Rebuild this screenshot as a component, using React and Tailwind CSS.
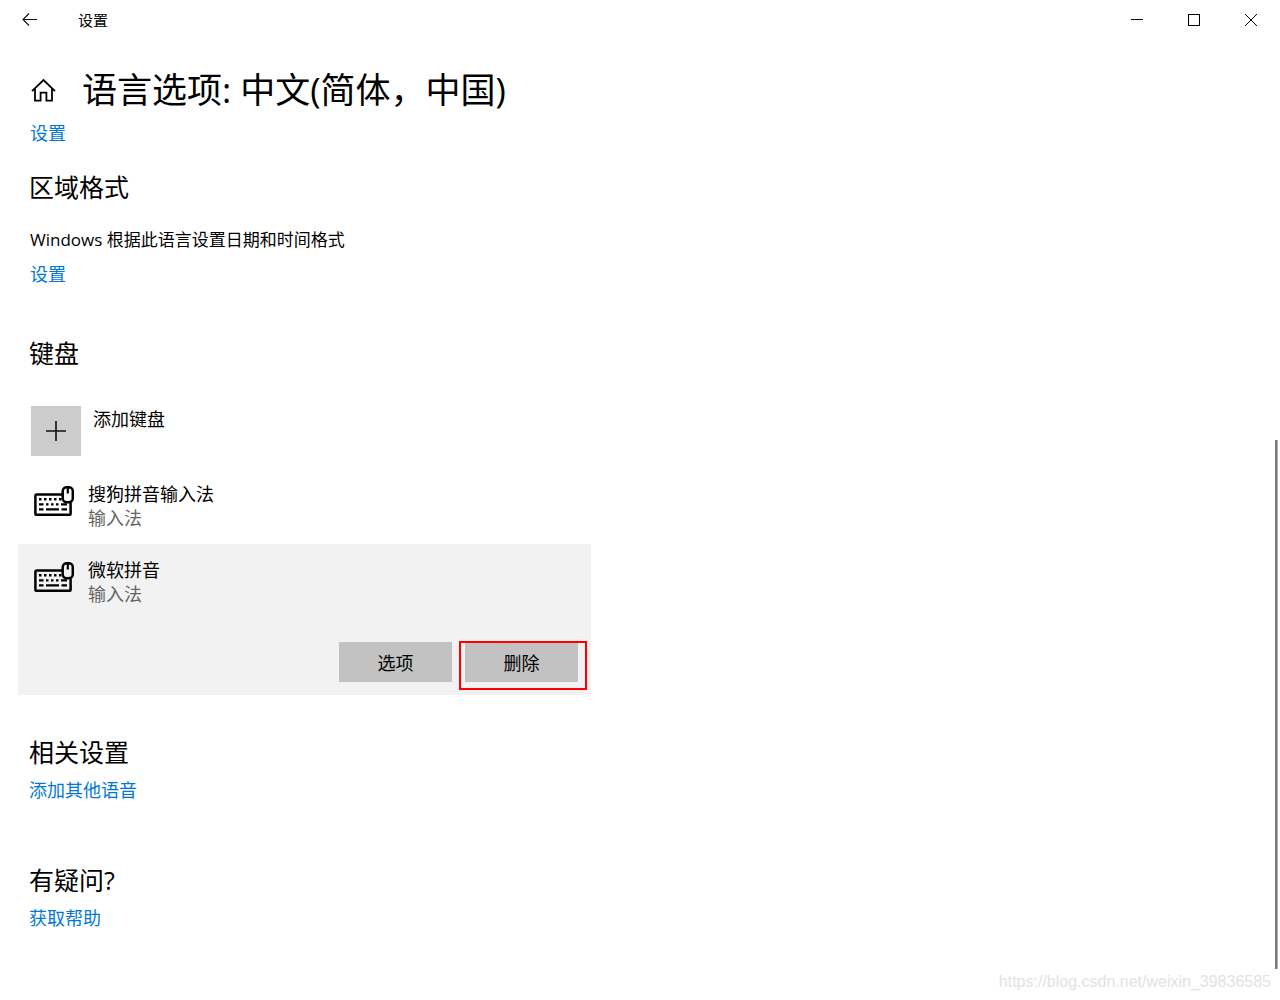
import React from "react";

function BackIcon() {
  return (
    <svg width="16" height="14" viewBox="0 0 16 14" fill="none" stroke="#111" strokeWidth="1.1" aria-hidden="true">
      <path d="M15 6.5H1M7 .5l-6 6 6 6" />
    </svg>
  );
}

function HomeIcon() {
  return (
    <svg width="25" height="24" viewBox="0 0 25 24" fill="none" stroke="#000" strokeWidth="1.8" aria-hidden="true">
      <path d="M1 13.1L12.5 2.1L24 13.1" />
      <path d="M4 10.7V22.6H9.6V14.6H15.4V22.6H21V10.7" />
    </svg>
  );
}

function KeyboardIcon() {
  return (
    <svg width="40" height="31" viewBox="0 0 40 31" fill="none" aria-hidden="true">
      <path
        d="M28 8.4H2.8Q1.4 8.4 1.4 9.8V27.4Q1.4 28.8 2.8 28.8H35.2Q36.6 28.8 36.6 27.4V16.5"
        stroke="#000"
        strokeWidth="2.5"
      />
      <rect x="28.7" y="1.2" width="10.1" height="15" rx="4" stroke="#000" strokeWidth="2.5" />
      <path d="M33.8 2V7.5" stroke="#000" strokeWidth="2.2" />
      <path
        d="M5 12h2.5v2.5H5zM10 12h2.5v2.5H10zM15 12h2.5v2.5H15zM20 12h2.5v2.5H20zM25 12h2.5v2.5H25zM5 17.2h4.5v2.4H5zM12 17.2h2.5v2.4H12zM17 17.2h2.5v2.4H17zM22 17.2h2.5v2.4H22zM27 17.2h6v2.4h-6zM5 22.2h4.5v2.4H5zM12 22.2h13v2.4H12zM27.5 22.2H33v2.4h-5.5z"
        fill="#000"
      />
    </svg>
  );
}

function TitleBar() {
  return (
    <header className="flex h-10 items-center justify-between">
      <div className="flex items-center">
        <button type="button" aria-label="返回" className="flex h-10 w-15 items-center justify-center">
          <BackIcon />
        </button>
        <span className="pl-[18px] text-[15px] leading-6">设置</span>
      </div>
      <div className="flex pr-px">
        <button type="button" aria-label="最小化" className="flex h-10 w-[57px] items-center justify-center">
          <svg width="12" height="12" stroke="#000" fill="none" shapeRendering="crispEdges">
            <path d="M0 5.5H12" />
          </svg>
        </button>
        <button type="button" aria-label="最大化" className="flex h-10 w-[57px] items-center justify-center">
          <svg width="12" height="12" stroke="#000" fill="none" shapeRendering="crispEdges">
            <path d="M.5 .5H11.5V11.5H.5Z" />
          </svg>
        </button>
        <button type="button" aria-label="关闭" className="flex h-10 w-[57px] items-center justify-center">
          <svg width="12" height="12" stroke="#000" fill="none">
            <path d="M0 0L12 12M12 0L0 12" />
          </svg>
        </button>
      </div>
    </header>
  );
}

function Heading({ children }) {
  return <h2 className="text-[25px] leading-8">{children}</h2>;
}

function TextLink({ children }) {
  return (
    <a href="#" className="block w-fit text-[#0078d7]">
      {children}
    </a>
  );
}

function Method({ name }) {
  return (
    <div className="flex gap-3.5">
      <span className="pt-1">
        <KeyboardIcon />
      </span>
      <div>
        <p>{name}</p>
        <p className="text-[#666]">输入法</p>
      </div>
    </div>
  );
}

function ActionButton({ children }) {
  return (
    <button type="button" className="h-10 w-[113px] bg-[#c2c2c2] pt-0.5">
      {children}
    </button>
  );
}

export default function App() {
  return (
    <div className="relative min-h-screen bg-white font-['Open_Sans','Noto_Sans_CJK_SC',sans-serif] text-[18px] leading-6 text-black">
      <TitleBar />
      <main className="pb-16">
        <div className="flex items-center pt-[26px] pl-[31px]">
          <a href="#" aria-label="主页">
            <HomeIcon />
          </a>
          <h1 className="pl-[26px] text-[35px] leading-12">语言选项: 中文(简体，中国)</h1>
        </div>
        <div className="mt-[7px] pl-[30px]">
          <TextLink>设置</TextLink>
        </div>

        <section className="mt-[26px] pl-[29px]">
          <Heading>区域格式</Heading>
          <p className="mt-[25px] pl-px text-[17px]">Windows 根据此语言设置日期和时间格式</p>
          <div className="mt-2.5 pl-px">
            <TextLink>设置</TextLink>
          </div>
        </section>

        <section className="mt-[51px]">
          <div className="pl-[29px]">
            <Heading>键盘</Heading>
          </div>
          <button type="button" className="mt-[37px] ml-[31px] flex items-start gap-3 text-left">
            <span className="flex size-[50px] items-center justify-center bg-[#ccc]">
              <svg width="20" height="20" stroke="#111" strokeWidth="1.6" aria-hidden="true">
                <path d="M0 10H20M10 0V20" />
              </svg>
            </span>
            <span className="pt-px">添加键盘</span>
          </button>
          <ul className="mt-3 ml-[18px] max-w-[573px]">
            <li className="h-19 px-4 pt-3.5">
              <Method name="搜狗拼音输入法" />
            </li>
            <li className="bg-[#f2f2f2] pt-3.5 pr-[13px] pb-[13px] pl-4">
              <Method name="微软拼音" />
              <div className="mt-9 flex justify-end gap-[13px]">
                <ActionButton>选项</ActionButton>
                <div className="relative">
                  <ActionButton>删除</ActionButton>
                  <div className="pointer-events-none absolute -top-px -right-[9px] -bottom-2 -left-1.5 border-2 border-[#f00]" />
                </div>
              </div>
            </li>
          </ul>
        </section>

        <section className="mt-[41px] pl-[29px]">
          <Heading>相关设置</Heading>
          <div className="mt-2.5">
            <TextLink>添加其他语音</TextLink>
          </div>
        </section>

        <section className="mt-[62px] pl-[29px]">
          <Heading>有疑问?</Heading>
          <div className="mt-2.5">
            <TextLink>获取帮助</TextLink>
          </div>
        </section>
      </main>
      <div className="absolute top-[44%] right-0.5 bottom-[31px] w-[3px] border-r border-[#b4b4b4] bg-[#7a7a7a]" />
      <p className="absolute right-[9px] bottom-1.5 font-['Liberation_Sans',sans-serif] text-[16px] text-[#e2e2e2]">
        https://blog.csdn.net/weixin_39836585
      </p>
    </div>
  );
}
